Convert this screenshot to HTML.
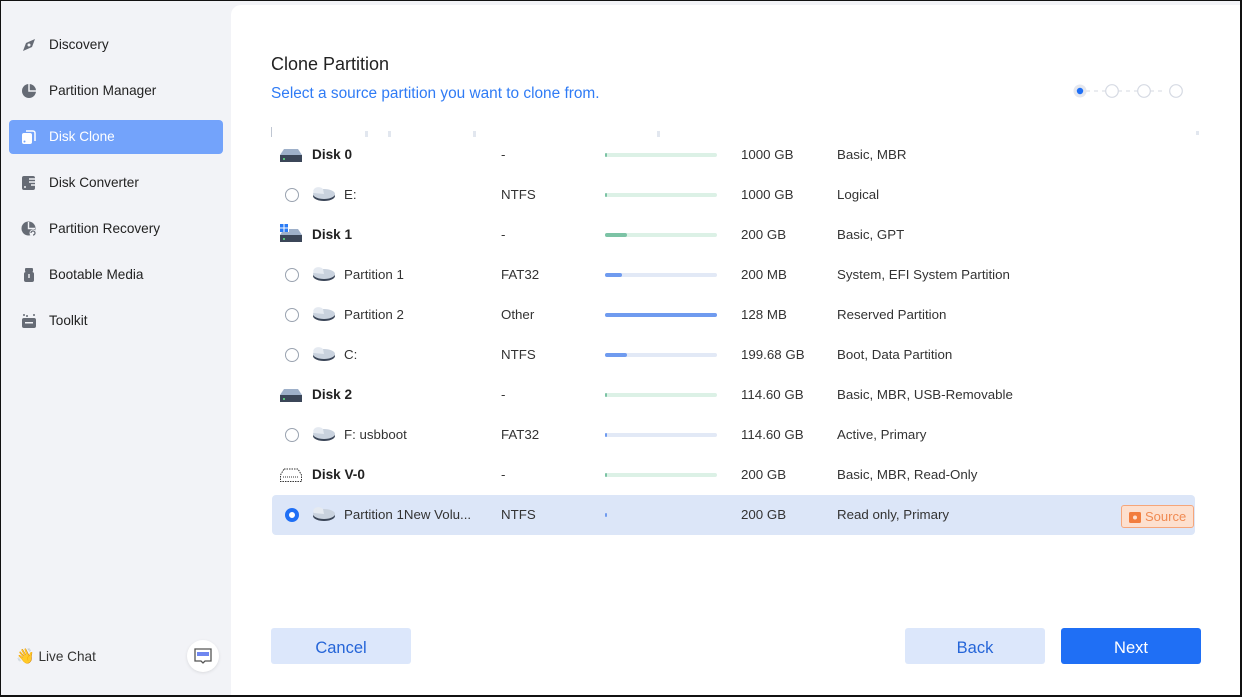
<!DOCTYPE html>
<html><head><meta charset="utf-8"><style>
*{box-sizing:border-box;margin:0;padding:0}
body{width:1242px;height:697px;overflow:hidden;font-family:"Liberation Sans",sans-serif;background:#f2f3f7;position:relative;color:#222}
.frame{position:absolute;inset:0;border:1.5px solid #111;border-right-width:2px;border-bottom-width:2px;pointer-events:none;z-index:10}
.side{position:absolute;left:0;top:0;width:231px;height:697px}
.nav{position:absolute;left:9px;width:214px;height:34px;border-radius:4px;font-size:13.6px;color:#222;line-height:34px;padding-left:40px}
.nav svg{position:absolute;left:12px;top:9px}
.nav.act{background:#73a3fb;color:#fff}
.main{position:absolute;left:231px;top:5px;width:1011px;height:692px;background:#fff;border-top-left-radius:10px}
.t1{position:absolute;left:271px;top:54px;font-size:18px;color:#222}
.t2{position:absolute;left:271px;top:85px;font-size:15.4px;color:#2f7bf5}
.row{position:absolute;left:272px;width:923px;height:40px;font-size:13.3px;line-height:40px;color:#333}
.row .c{position:absolute;top:0}
.row b{font-weight:bold;color:#222;font-size:13.6px}
.bar{position:absolute;left:333px;top:18px;width:112px;height:4px;border-radius:2px}
.bar i{position:absolute;left:0;top:0;height:4px;border-radius:2px}
.g{background:#dcf1e6}.g i{background:#7cc3a5}
.b{background:#e2e9f6}.b i{background:#6f9bef}
.radio{position:absolute;left:13px;top:13px;width:14px;height:14px;border:1.3px solid #9aa3b0;border-radius:50%}
.btn{position:absolute;top:628px;width:140px;height:36px;border-radius:3px;font-size:16.5px;line-height:40px;text-align:center}
</style></head><body>
<div class="side">
<div class="nav" style="top:28px"><svg width="16" height="16" viewBox="0 0 16 16"><path d="M2 14 L5 6 L14 2 L11 10 Z" fill="#666b75"/><circle cx="8" cy="8" r="1.5" fill="#f2f3f7"/></svg>Discovery</div>
<div class="nav" style="top:74px"><svg width="16" height="16" viewBox="0 0 16 16"><circle cx="8" cy="8" r="7" fill="#666b75"/><path d="M8 1 V8 H15" stroke="#f2f3f7" stroke-width="1.5" fill="none"/></svg>Partition Manager</div>
<div class="nav act" style="top:120px"><svg width="16" height="16" viewBox="0 0 16 16"><rect x="1" y="4" width="10" height="11" rx="2" fill="#fff"/><path d="M5 2 H12 a2 2 0 0 1 2 2 V12" stroke="#fff" stroke-width="1.5" fill="none"/><circle cx="3.5" cy="12.5" r="1" fill="#73a3fb"/></svg>Disk Clone</div>
<div class="nav" style="top:166px"><svg width="16" height="16" viewBox="0 0 16 16"><rect x="1" y="1" width="13" height="14" rx="2" fill="#666b75"/><path d="M8 4 H14 M8 7 H14 M10 10 H14" stroke="#f2f3f7" stroke-width="1.4"/><circle cx="4" cy="12" r="1" fill="#f2f3f7"/></svg>Disk Converter</div>
<div class="nav" style="top:212px"><svg width="16" height="16" viewBox="0 0 16 16"><circle cx="7.5" cy="7.5" r="7" fill="#666b75"/><path d="M7.5 1 V7.5 H14" stroke="#f2f3f7" stroke-width="1.4" fill="none"/><circle cx="12" cy="12" r="3.5" fill="#f2f3f7"/><path d="M10 12 a2 2 0 1 1 2 2" stroke="#666b75" stroke-width="1.3" fill="none"/></svg>Partition Recovery</div>
<div class="nav" style="top:258px"><svg width="16" height="16" viewBox="0 0 16 16"><rect x="4" y="1" width="8" height="4" rx="1" fill="#666b75"/><rect x="3" y="5" width="10" height="10" rx="2" fill="#666b75"/><rect x="7.3" y="7" width="1.4" height="4" fill="#f2f3f7"/></svg>Bootable Media</div>
<div class="nav" style="top:304px"><svg width="16" height="16" viewBox="0 0 16 16"><rect x="1" y="5" width="14" height="10" rx="2" fill="#666b75"/><rect x="4" y="9" width="8" height="1.5" fill="#f2f3f7"/><circle cx="3" cy="2" r="1" fill="#666b75"/><circle cx="6" cy="3" r="1" fill="#666b75"/><circle cx="13" cy="2" r="1" fill="#666b75"/></svg>Toolkit</div>
<div style="position:absolute;left:16px;top:647px;font-size:13.6px;color:#333"><span style="font-size:15px">👋</span> Live Chat</div>
<div style="position:absolute;left:187px;top:640px;width:32px;height:32px;border-radius:50%;background:#fff;box-shadow:0 1px 3px rgba(0,0,0,.1)"><svg width="32" height="32" viewBox="0 0 32 32"><path d="M8 9 H24 V21 H18 L16 23 L14 21 H8 Z" fill="none" stroke="#555" stroke-width="1.3"/><rect x="10" y="12" width="12" height="4" fill="#6f86f0"/></svg></div>
</div>
<div class="main"></div>
<div class="t1">Clone Partition</div>
<div class="t2">Select a source partition you want to clone from.</div>
<svg style="position:absolute;left:1070px;top:80px" width="120" height="22"><line x1="16" y1="11" x2="96" y2="11" stroke="#e3e6ec" stroke-width="1.5" stroke-dasharray="4 4"/><circle cx="10" cy="11" r="6.5" fill="#e4e7ef"/><circle cx="10" cy="11" r="3.2" fill="#1f6ff5"/><circle cx="42" cy="11" r="6.3" fill="#fff" stroke="#d6dae3" stroke-width="1.2"/><circle cx="74" cy="11" r="6.3" fill="#fff" stroke="#d6dae3" stroke-width="1.2"/><circle cx="106" cy="11" r="6.3" fill="#fff" stroke="#d6dae3" stroke-width="1.2"/></svg>
<div style="position:absolute;left:271px;top:127px;width:1px;height:10px;background:#bfc6d2"></div>
<div style="position:absolute;left:365px;top:131px;width:3px;height:6px;background:#e2e7ef"></div>
<div style="position:absolute;left:388px;top:131px;width:3px;height:6px;background:#e2e7ef"></div>
<div style="position:absolute;left:473px;top:131px;width:3px;height:6px;background:#e2e7ef"></div>
<div style="position:absolute;left:657px;top:131px;width:3px;height:6px;background:#e2e7ef"></div>
<div style="position:absolute;left:1196px;top:131px;width:3px;height:4px;background:#e2e7ef"></div>

<div class="row" style="top:135px"><svg class="c" style="left:8px;top:13px" width="22" height="14"><path d="M4 1 H18 L22 7 V14 H0 V7 Z" fill="#9eb0c9"/><rect x="0" y="7" width="22" height="7" fill="#3b4658"/><rect x="3" y="10" width="2" height="2" fill="#58c27a"/></svg><b class="c" style="left:40px">Disk 0</b><span class="c" style="left:229px">-</span><div class="bar g"><i style="width:2px"></i></div><span class="c" style="left:469px">1000 GB</span><span class="c" style="left:565px">Basic, MBR</span></div>

<div class="row" style="top:175px"><div class="radio"></div><svg class="c" style="left:40px;top:12px" width="24" height="16"><ellipse cx="12" cy="9" rx="11" ry="5" fill="#3b4658"/><ellipse cx="12" cy="7" rx="11" ry="5" fill="#c9d2de"/><path d="M2 6 a4 3 0 0 1 9 -4 L12 7 Z" fill="#e5eaf1"/></svg><span class="c" style="left:72px">E:</span><span class="c" style="left:229px">NTFS</span><div class="bar g"><i style="width:2px"></i></div><span class="c" style="left:469px">1000 GB</span><span class="c" style="left:565px">Logical</span></div>

<div class="row" style="top:215px"><svg class="c" style="left:8px;top:9px" width="22" height="18"><rect x="0" y="0" width="3.5" height="3.5" fill="#2a7bf5"/><rect x="4.5" y="0" width="3.5" height="3.5" fill="#2a7bf5"/><rect x="0" y="4.5" width="3.5" height="3.5" fill="#2a7bf5"/><rect x="4.5" y="4.5" width="3.5" height="3.5" fill="#2a7bf5"/><path d="M9 5 H18 L22 11 V18 H0 V11 L2 8 H9Z" fill="#9eb0c9"/><rect x="0" y="11" width="22" height="7" fill="#3b4658"/><rect x="3" y="14" width="2" height="2" fill="#58c27a"/></svg><b class="c" style="left:40px">Disk 1</b><span class="c" style="left:229px">-</span><div class="bar g"><i style="width:22px"></i></div><span class="c" style="left:469px">200 GB</span><span class="c" style="left:565px">Basic, GPT</span></div>

<div class="row" style="top:255px"><div class="radio"></div><svg class="c" style="left:40px;top:12px" width="24" height="16"><ellipse cx="12" cy="9" rx="11" ry="5" fill="#3b4658"/><ellipse cx="12" cy="7" rx="11" ry="5" fill="#c9d2de"/><path d="M2 6 a4 3 0 0 1 9 -4 L12 7 Z" fill="#e5eaf1"/></svg><span class="c" style="left:72px">Partition 1</span><span class="c" style="left:229px">FAT32</span><div class="bar b"><i style="width:17px"></i></div><span class="c" style="left:469px">200 MB</span><span class="c" style="left:565px">System, EFI System Partition</span></div>

<div class="row" style="top:295px"><div class="radio"></div><svg class="c" style="left:40px;top:12px" width="24" height="16"><ellipse cx="12" cy="9" rx="11" ry="5" fill="#3b4658"/><ellipse cx="12" cy="7" rx="11" ry="5" fill="#c9d2de"/><path d="M2 6 a4 3 0 0 1 9 -4 L12 7 Z" fill="#e5eaf1"/></svg><span class="c" style="left:72px">Partition 2</span><span class="c" style="left:229px">Other</span><div class="bar b"><i style="width:112px"></i></div><span class="c" style="left:469px">128 MB</span><span class="c" style="left:565px">Reserved Partition</span></div>

<div class="row" style="top:335px"><div class="radio"></div><svg class="c" style="left:40px;top:12px" width="24" height="16"><ellipse cx="12" cy="9" rx="11" ry="5" fill="#3b4658"/><ellipse cx="12" cy="7" rx="11" ry="5" fill="#c9d2de"/><path d="M2 6 a4 3 0 0 1 9 -4 L12 7 Z" fill="#e5eaf1"/></svg><span class="c" style="left:72px">C:</span><span class="c" style="left:229px">NTFS</span><div class="bar b"><i style="width:22px"></i></div><span class="c" style="left:469px">199.68 GB</span><span class="c" style="left:565px">Boot, Data Partition</span></div>

<div class="row" style="top:375px"><svg class="c" style="left:8px;top:13px" width="22" height="14"><path d="M4 1 H18 L22 7 V14 H0 V7 Z" fill="#9eb0c9"/><rect x="0" y="7" width="22" height="7" fill="#3b4658"/><rect x="3" y="10" width="2" height="2" fill="#58c27a"/></svg><b class="c" style="left:40px">Disk 2</b><span class="c" style="left:229px">-</span><div class="bar g"><i style="width:2px"></i></div><span class="c" style="left:469px">114.60 GB</span><span class="c" style="left:565px">Basic, MBR, USB-Removable</span></div>

<div class="row" style="top:415px"><div class="radio"></div><svg class="c" style="left:40px;top:12px" width="24" height="16"><ellipse cx="12" cy="9" rx="11" ry="5" fill="#3b4658"/><ellipse cx="12" cy="7" rx="11" ry="5" fill="#c9d2de"/><path d="M2 6 a4 3 0 0 1 9 -4 L12 7 Z" fill="#e5eaf1"/></svg><span class="c" style="left:72px">F: usbboot</span><span class="c" style="left:229px">FAT32</span><div class="bar b"><i style="width:2px"></i></div><span class="c" style="left:469px">114.60 GB</span><span class="c" style="left:565px">Active, Primary</span></div>

<div class="row" style="top:455px"><svg class="c" style="left:8px;top:13px" width="22" height="14"><path d="M4 1 H18 L21.5 7 V13.5 H0.5 V7 Z" fill="#fff" stroke="#333" stroke-dasharray="1.5 1"/><line x1="3" y1="9" x2="19" y2="9" stroke="#333" stroke-dasharray="1 1"/></svg><b class="c" style="left:40px">Disk V-0</b><span class="c" style="left:229px">-</span><div class="bar g"><i style="width:2px"></i></div><span class="c" style="left:469px">200 GB</span><span class="c" style="left:565px">Basic, MBR, Read-Only</span></div>

<div class="row" style="top:495px;background:#dce6f8;border-radius:4px"><div class="radio" style="border:4px solid #1f6ff5;background:#fff"></div><svg class="c" style="left:40px;top:12px" width="24" height="16"><ellipse cx="12" cy="9" rx="11" ry="5" fill="#3b4658"/><ellipse cx="12" cy="7" rx="11" ry="5" fill="#c9d2de"/><path d="M2 6 a4 3 0 0 1 9 -4 L12 7 Z" fill="#e5eaf1"/></svg><span class="c" style="left:72px">Partition 1New Volu...</span><span class="c" style="left:229px">NTFS</span><div class="bar" style="background:transparent"><i style="width:2px;background:#6f9bef"></i></div><span class="c" style="left:469px">200 GB</span><span class="c" style="left:565px">Read only, Primary</span>
<div style="position:absolute;left:849px;top:10px;width:73px;height:23px;border:1px solid #f6a67a;background:#fde0cf;border-radius:3px;font-size:13px;line-height:21px;color:#f08a52;padding-left:23px"><svg style="position:absolute;left:7px;top:5px" width="12" height="12"><rect x="0" y="1" width="12" height="11" rx="1.5" fill="#f27d3e"/><circle cx="6" cy="6.5" r="2" fill="#fde0cf"/></svg>Source</div></div>

<div class="btn" style="left:271px;background:#dce7fb;color:#2565d8">Cancel</div>
<div class="btn" style="left:905px;background:#dce7fb;color:#2565d8">Back</div>
<div class="btn" style="left:1061px;background:#1f6ff5;color:#fff">Next</div>
<div class="frame"></div>
</body></html>
